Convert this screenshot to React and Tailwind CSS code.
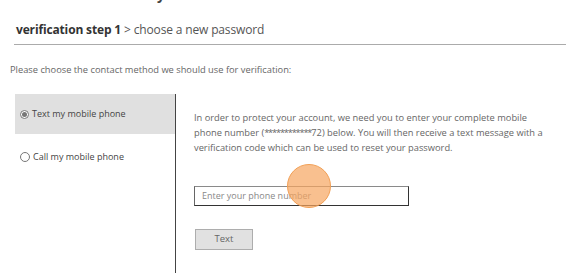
export default function App() {
  return (
    <div className="relative w-[566px] h-[273px] overflow-hidden bg-white font-['Open_Sans',sans-serif] text-[#666]">
      <div className="h-[4px] overflow-hidden pl-[157px]">
        <div className="-mt-[13px] text-[14px] leading-[16px] font-bold text-[#444]">y</div>
      </div>
      <div className="ml-[14px] h-[41px] border-b border-[#ababab] pt-[17px] pl-[2px] text-[12px] leading-[18px] whitespace-nowrap tracking-[-0.15px]">
        <span className="font-bold text-[#333]">verification step 1</span>
        <span className="text-[#555]"> &gt; choose a new password</span>
      </div>
      <div className="mt-[19px] ml-[10px] text-[9.3px] leading-[12px] whitespace-nowrap text-[#666]">
        Please choose the contact method we should use for verification:
      </div>
      <div className="mt-[18px] ml-[15px] flex h-[200px]">
        <div className="w-[160px] flex flex-col">
          <div className="h-[40px] bg-[#e0e0e0] flex items-center pl-[5px] gap-[3px]">
            <div className="w-[9px] h-[9px] rounded-full border border-[#777] bg-white flex items-center justify-center">
              <div className="w-[5px] h-[5px] rounded-full bg-[#777]" />
            </div>
            <span className="text-[9px] leading-[12px] text-[#444] whitespace-nowrap">Text my mobile phone</span>
          </div>
          <div className="h-[45px] flex items-center pl-[5px] gap-[3px]">
            <div className="w-[10px] h-[10px] rounded-full border border-[#777] bg-white" />
            <span className="text-[9px] leading-[12px] text-[#444] whitespace-nowrap">Call my mobile phone</span>
          </div>
        </div>
        <div className="border-l border-[#444] pl-[18px] pt-[16px] flex flex-col items-start">
          <p className="text-[9.3px] leading-[15px] text-[#666] whitespace-nowrap">
            In order to protect your account, we need you to enter your complete mobile<br />
            phone number (<span className="tracking-[-1.2px]">************</span>72) below. You will then receive a text message with a<br />
            verification code which can be used to reset your password.
          </p>
          <div className="mt-[31px] w-[215px] h-[20px] border border-t-[#8a8a8a] border-l-[#666] border-r-[#333] border-b-[#333] flex items-center pl-[7px] text-[9px] text-[#888]">
            Enter your phone number
          </div>
          <button className="mt-[23px] ml-[1px] w-[58px] h-[21px] bg-[#e1e1e1] border border-[#adadad] text-[9.5px] text-[#666] flex items-center justify-center">
            Text
          </button>
        </div>
      </div>
      <div className="absolute left-[287px] top-[164px] w-[44px] h-[44px] rounded-full bg-[#f7a560]/70 border border-[#f2a056]" />
    </div>
  );
}
